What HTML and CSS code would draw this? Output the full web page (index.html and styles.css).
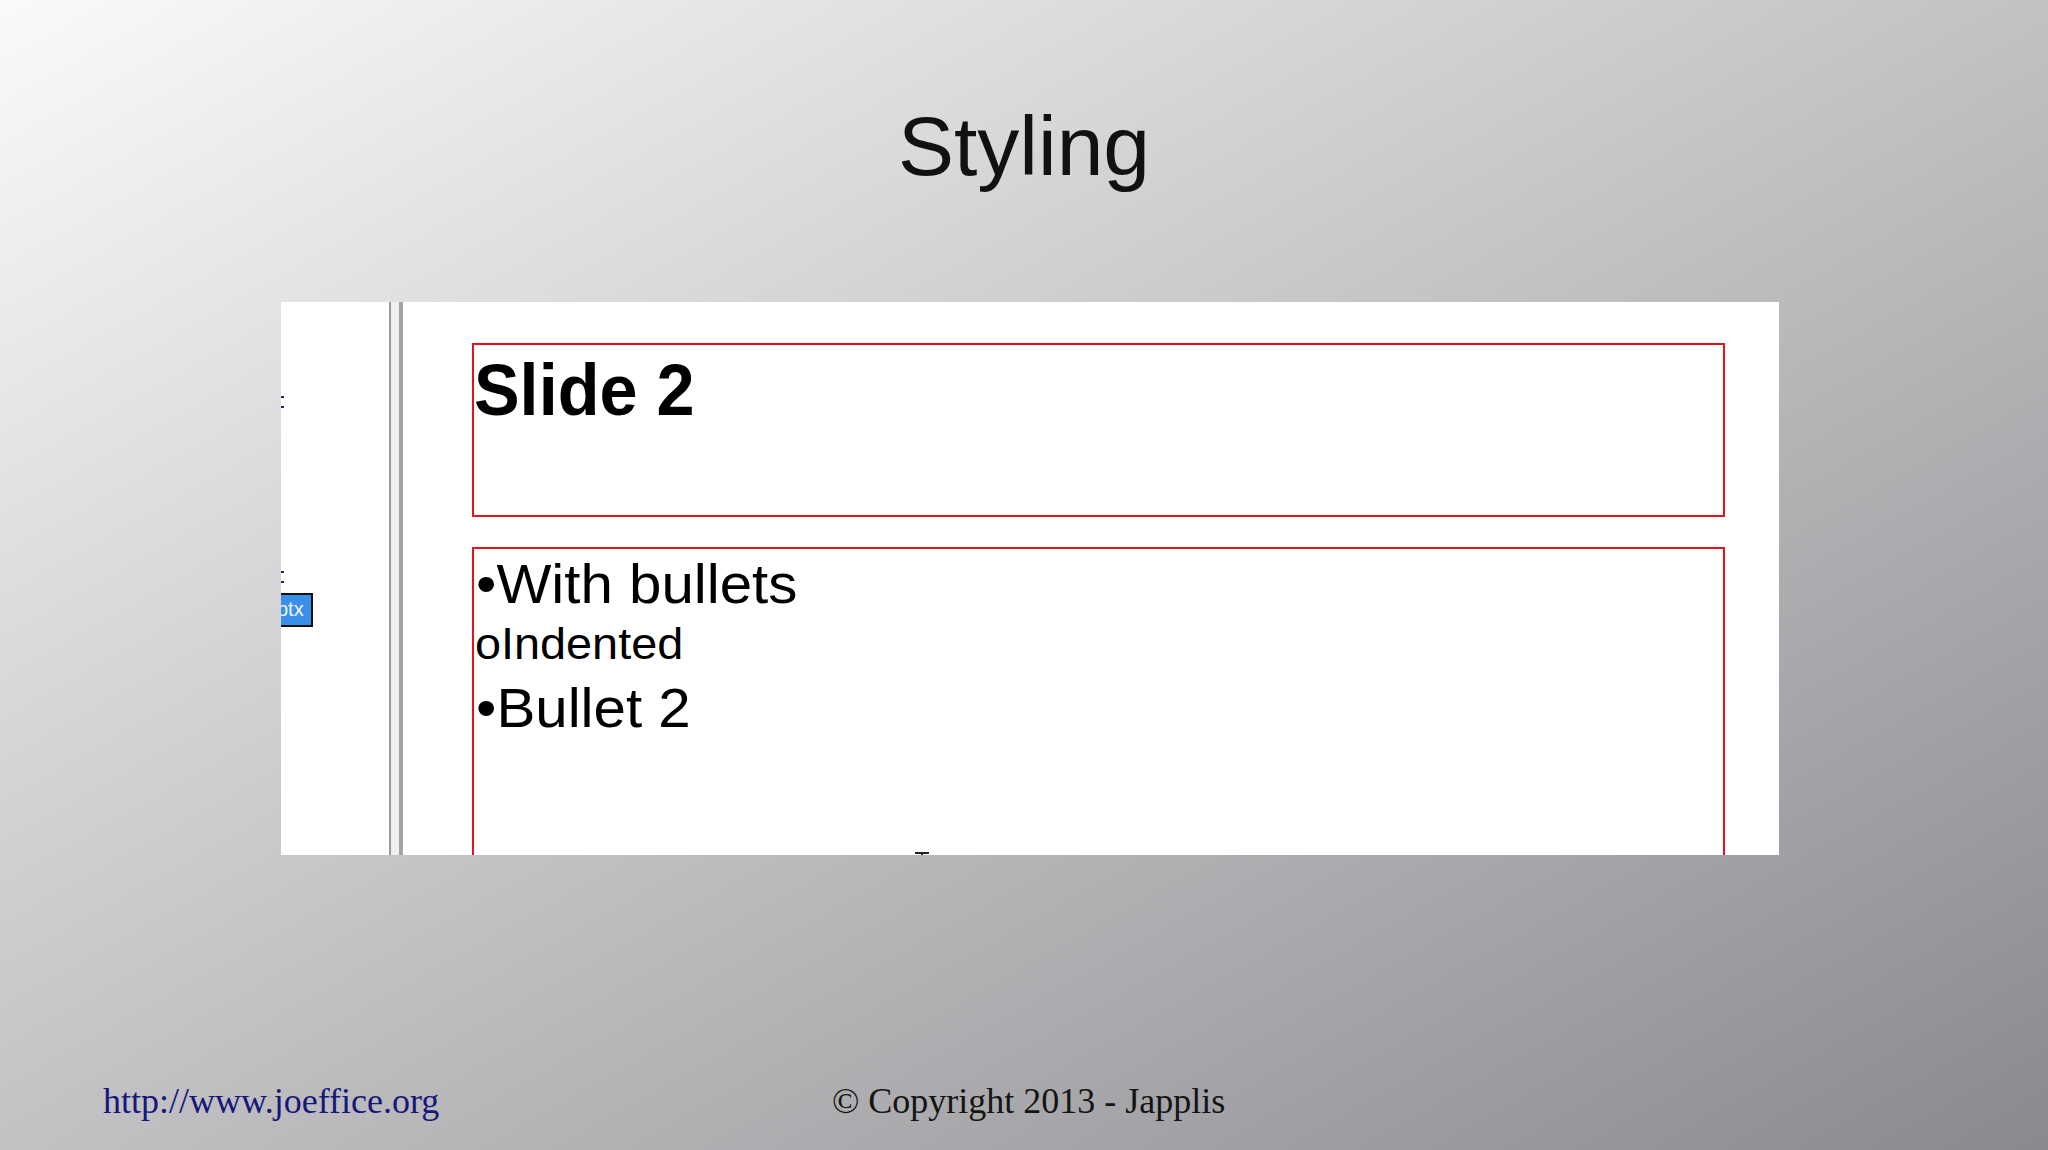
FILE: index.html
```html
<!DOCTYPE html>
<html lang="en">
<head>
    <meta charset="UTF-8">
    <meta name="viewport" content="width=device-width, initial-scale=1.0">
    <title>Styling</title>
    <link rel="stylesheet" href="styles.css">
</head>
<body>
    <div class="slide">
        <h1 class="slide-title">Styling</h1>

        <div class="shot">
            <div class="side">
                <div class="marker marker-first"></div>
                <div class="marker marker-second"></div>
                <div class="tab">ptx</div>
            </div>
            <div class="splitter"></div>
            <div class="canvas">
                <div class="placeholder title-box">
                    <span class="shot-title">Slide 2</span>
                </div>
                <div class="placeholder body-box">
                    <span class="line big">•With bullets</span>
                    <span class="line small">oIndented</span>
                    <span class="line big second">•Bullet 2</span>
                </div>
            </div>
            <div class="cursor"></div>
        </div>

        <div class="footer">
            <span class="url">http://www.joeffice.org</span>
            <span class="copy">© Copyright 2013 - Japplis</span>
        </div>
    </div>
</body>
</html>
```

FILE: styles.css
```css
html, body {
    margin: 0;
    padding: 0;
}
body {
    width: 2048px;
    height: 1150px;
    overflow: hidden;
    background: linear-gradient(to bottom right, #fafafa 0%, #c2c2c4 50%, #8a898e 100%);
    font-family: "Liberation Sans", Arial, sans-serif;
}
.slide {
    display: flex;
    flex-direction: column;
    height: 100%;
}
.slide-title {
    margin: 0;
    padding-top: 96px;
    font-size: 84px;
    line-height: 100px;
    font-weight: normal;
    text-align: center;
    color: #111;
}

/* screenshot of the editor */
.shot {
    position: relative;
    display: flex;
    width: 1498px;
    height: 553px;
    margin: 106px 0 0 281px;
    background-color: #fff;
    overflow: hidden;
}
.side {
    width: 108px;
    display: flex;
    flex-direction: column;
}
.marker {
    width: 3px;
    height: 8px;
    border-top: 2px solid #1c2a5c;
    border-bottom: 2px solid #1c2a5c;
}
.marker-first {
    margin-top: 94px;
}
.marker-second {
    margin-top: 163px;
}
.tab {
    width: 30px;
    height: 30px;
    margin-top: 10px;
    background-color: #3a8fe8;
    border: 2px solid #111;
    border-left: none;
    color: #eef4ff;
    font-size: 20px;
    line-height: 28px;
    text-indent: -4px;
    overflow: hidden;
    white-space: nowrap;
}
.splitter {
    width: 8px;
    border-left: 2px solid #9a9a9a;
    border-right: 4px solid #a3a3a3;
    background-color: #efefef;
}
.canvas {
    flex: 1;
    padding: 41px 0 0 69px;
}
.placeholder {
    box-sizing: border-box;
    width: 1253px;
    border: 2px solid #e3121c;
}
.title-box {
    height: 174px;
    padding-top: 5px;
}
.body-box {
    height: 400px;
    margin-top: 30px;
    padding-top: 3px;
}
.shot-title {
    display: block;
    font-size: 72px;
    line-height: 80px;
    font-weight: bold;
    color: #000;
    transform: scaleX(0.95);
    transform-origin: left center;
    white-space: nowrap;
}
.line {
    display: block;
    color: #000;
    transform: scaleX(1.04);
    transform-origin: left center;
    white-space: nowrap;
}
.line.big {
    margin-left: 2px;
    font-size: 56px;
    line-height: 64px;
}
.line.small {
    margin: 2px 0 0 1px;
    font-size: 45px;
    line-height: 52px;
}
.line.second {
    margin-top: 6px;
}
.cursor {
    position: absolute;
    left: 634px;
    top: 550px;
    width: 14px;
    height: 2px;
    background-color: #222;
}
.cursor::after {
    content: "";
    position: absolute;
    left: 6px;
    top: 2px;
    width: 2px;
    height: 4px;
    background-color: #222;
}

.footer {
    display: grid;
    grid-template-columns: 729px auto;
    margin-top: 224px;
    padding-left: 103px;
    font-family: "Liberation Serif", "Times New Roman", serif;
    font-size: 36px;
    line-height: 44px;
}
.url {
    color: #17177a;
}
.copy {
    color: #141414;
}
```
